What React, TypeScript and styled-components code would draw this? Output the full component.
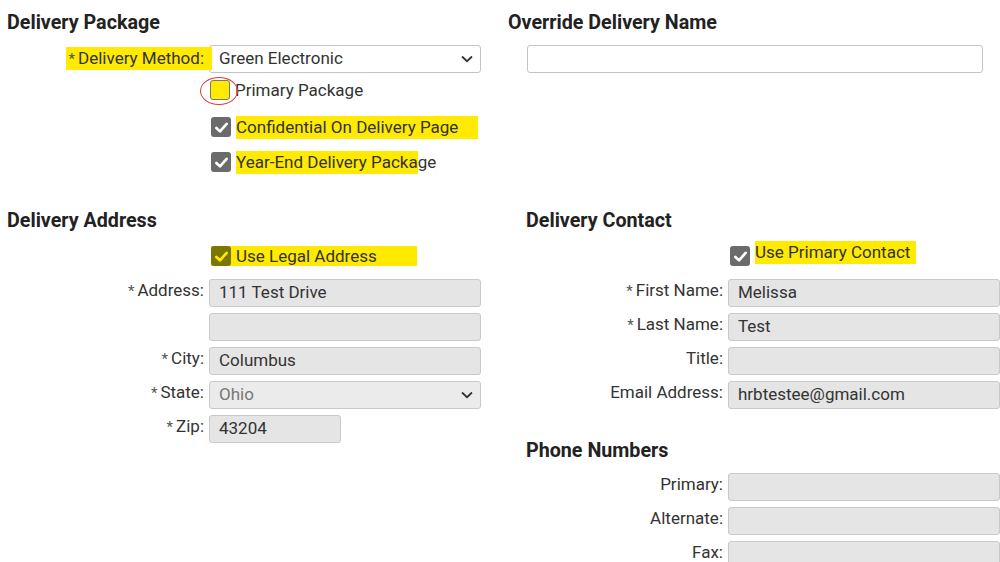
import { ReactNode } from "react";
import styled, { createGlobalStyle } from "styled-components";

const GlobalStyle = createGlobalStyle`
  html, body {
    margin: 0;
    padding: 0;
    background: #ffffff;
    font-family: Roboto, "Liberation Sans", Arial, sans-serif;
    color: #333333;
  }
`;

const Page = styled.div`
  width: 1000px;
  height: 562px;
  overflow: hidden;
  padding-top: 10px;
  box-sizing: border-box;
`;

const Band = styled.div<{ $split: number; $gap?: number }>`
  display: grid;
  grid-template-columns: ${(p) => p.$split}px 1fr;
  margin-top: ${(p) => p.$gap ?? 0}px;
`;

const Section = styled.div<{ $pad?: number }>`
  display: flex;
  flex-direction: column;
  padding-left: ${(p) => p.$pad ?? 0}px;
`;

const Heading = styled.h2<{ $top?: number }>`
  margin: ${(p) => p.$top ?? 0}px 0 0 0;
  font-size: 19.7px;
  line-height: 26px;
  font-weight: 700;
  color: #222222;
`;

const FormRow = styled.div<{ $top?: number }>`
  display: grid;
  grid-template-columns: 197px 272px;
  column-gap: 5px;
  align-items: start;
  margin-top: ${(p) => p.$top ?? 6}px;
`;

const Label = styled.label`
  position: relative;
  z-index: 1;
  padding-top: 1px;
  font-size: 17px;
  line-height: 20px;
  text-align: right;
  white-space: nowrap;
  color: #333333;
`;

const Star = styled.span`
  font-size: 15px;
  color: #555555;
  margin-right: 3px;
`;

const Marker = styled.span<{ $padL?: number; $padR?: number; $over?: number }>`
  background: #ffea00;
  padding: 1px ${(p) => p.$padR ?? 0}px 2px ${(p) => p.$padL ?? 0}px;
  margin-right: ${(p) => -(p.$over ?? 0)}px;
`;

const Field = styled.div<{ $disabled?: boolean; $width?: number; $muted?: boolean }>`
  position: relative;
  box-sizing: border-box;
  height: 28px;
  width: ${(p) => (p.$width ? `${p.$width}px` : "100%")};
  border: 1px solid ${(p) => (p.$disabled ? "#c9c9c9" : "#c4c4c4")};
  border-radius: 3px;
  background: ${(p) => (p.$disabled ? (p.$muted ? "#ebebeb" : "#e5e5e5") : "#ffffff")};
  padding: 0 9px;
  font-size: 17px;
  line-height: 25px;
  color: ${(p) => (p.$muted ? "#777777" : "#333333")};
`;

const Chevron = styled.svg`
  position: absolute;
  right: 7px;
  top: 9px;
`;

const CheckRow = styled.div<{ $top: number }>`
  display: flex;
  align-items: center;
  height: 24px;
  margin-top: ${(p) => p.$top}px;
  font-size: 17px;
  line-height: 20px;
  color: #333333;
`;

const CheckIndent = styled.div<{ $left?: number }>`
  display: flex;
  align-items: center;
  margin-left: ${(p) => p.$left ?? 204}px;
`;

const Box = styled.span<{ $state: "on" | "off" | "olive" }>`
  position: relative;
  box-sizing: border-box;
  display: inline-flex;
  align-items: center;
  justify-content: center;
  width: 20px;
  height: 20px;
  border-radius: 3px;
  margin-right: 5px;
  background: ${(p) =>
    p.$state === "on" ? "#6b6b6b" : p.$state === "olive" ? "#7a7600" : "#ffea00"};
  border: ${(p) => (p.$state === "off" ? "1.5px solid #777777" : "none")};
`;

const Ring = styled.span`
  position: absolute;
  left: -11px;
  top: -4px;
  width: 36px;
  height: 26px;
  border: 1px solid #e03a3a;
  border-radius: 50%;
`;

const LegalMarker = styled.span`
  display: flex;
  align-items: center;
  background: #ffea00;
  padding-right: 40px;
  height: 20px;
`;

const OverrideInput = styled(Field)`
  margin: 9px 0 0 19px;
  width: 456px;
`;

function Check({ state, ring }: { state: "on" | "off" | "olive"; ring?: boolean }) {
  return (
    <Box $state={state}>
      {state !== "off" && (
        <svg width="15" height="15" viewBox="0 0 14 14">
          <path
            d="M2.2 7.4 L5.6 10.6 L11.8 3.6"
            fill="none"
            stroke={state === "olive" ? "#ffea00" : "#ffffff"}
            strokeWidth="2.5"
            strokeLinecap="round"
            strokeLinejoin="round"
          />
        </svg>
      )}
      {ring && <Ring />}
    </Box>
  );
}

function Arrow() {
  return (
    <Chevron width="12" height="8" viewBox="0 0 12 8">
      <path d="M1 1.5 L6 6.2 L11 1.5" fill="none" stroke="#333" strokeWidth="1.8" />
    </Chevron>
  );
}

function Row({
  label,
  required,
  value,
  top,
  children,
}: {
  label: string;
  required?: boolean;
  value?: string;
  top?: number;
  children?: ReactNode;
}) {
  return (
    <FormRow $top={top}>
      <Label>
        {required && <Star>*</Star>}
        {label}
      </Label>
      {children ?? <Field $disabled>{value}</Field>}
    </FormRow>
  );
}

export default function App() {
  return (
    <Page>
      <GlobalStyle />
      <Band $split={508}>
        <Section $pad={7}>
          <Heading>Delivery Package</Heading>
          <FormRow $top={9}>
            <Label style={{ paddingTop: 3 }}>
              <Marker $padL={3} $padR={8} $over={8}>
                <Star>*</Star>Delivery Method:
              </Marker>
            </Label>
            <Field>
              Green Electronic
              <Arrow />
            </Field>
          </FormRow>
          <CheckRow $top={5}>
            <CheckIndent $left={203}>
              <Check state="off" ring />
              Primary Package
            </CheckIndent>
          </CheckRow>
          <CheckRow $top={13}>
            <CheckIndent>
              <Check state="on" />
              <Marker $padR={20}>Confidential On Delivery Page</Marker>
            </CheckIndent>
          </CheckRow>
          <CheckRow $top={11}>
            <CheckIndent>
              <Check state="on" />
              <span>
                <Marker>Year-End Delivery Packa</Marker>ge
              </span>
            </CheckIndent>
          </CheckRow>
        </Section>
        <Section>
          <Heading>Override Delivery Name</Heading>
          <OverrideInput />
        </Section>
      </Band>

      <Band $split={526} $gap={34}>
        <Section $pad={7}>
          <Heading>Delivery Address</Heading>
          <CheckRow $top={10}>
            <CheckIndent>
              <LegalMarker>
                <Check state="olive" />
                Use Legal Address
              </LegalMarker>
            </CheckIndent>
          </CheckRow>
          <Row label="Address:" required value="111 Test Drive" top={11} />
          <Row label="" value="" />
          <Row label="City:" required value="Columbus" />
          <Row label="State:" required>
            <Field $disabled $muted>
              Ohio
              <Arrow />
            </Field>
          </Row>
          <Row label="Zip:" required>
            <Field $disabled $width={132}>
              43204
            </Field>
          </Row>
        </Section>
        <Section>
          <Heading>Delivery Contact</Heading>
          <CheckRow $top={10}>
            <CheckIndent>
              <Check state="on" />
              <Marker $padR={6} style={{ position: "relative", top: -4 }}>
                Use Primary Contact
              </Marker>
            </CheckIndent>
          </CheckRow>
          <Row label="First Name:" required value="Melissa" top={11} />
          <Row label="Last Name:" required value="Test" />
          <Row label="Title:" value="" />
          <Row label="Email Address:" value="hrbtestee@gmail.com" />
          <Heading $top={29}>Phone Numbers</Heading>
          <Row label="Primary:" value="" top={9} />
          <Row label="Alternate:" value="" />
          <Row label="Fax:" value="" />
        </Section>
      </Band>
    </Page>
  );
}
